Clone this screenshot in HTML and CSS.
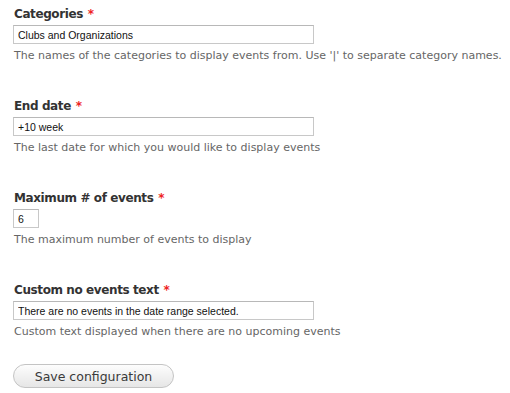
FILE: index.html
```html
<!DOCTYPE html>
<html>
<head>
<meta charset="utf-8">
<link rel="stylesheet" href="styles.css">
</head>
<body>
<form class="config">
  <div class="item">
    <label class="label">Categories <span class="req">*</span></label>
    <input class="text" type="text" value="Clubs and Organizations">
    <div class="desc">The names of the categories to display events from. Use '|' to separate category names.</div>
  </div>
  <div class="item">
    <label class="label">End date <span class="req">*</span></label>
    <input class="text" type="text" value="+10 week">
    <div class="desc">The last date for which you would like to display events</div>
  </div>
  <div class="item">
    <label class="label">Maximum # of events <span class="req">*</span></label>
    <input class="text num" type="text" value="6">
    <div class="desc">The maximum number of events to display</div>
  </div>
  <div class="item">
    <label class="label">Custom no events text <span class="req">*</span></label>
    <input class="text" type="text" value="There are no events in the date range selected.">
    <div class="desc">Custom text displayed when there are no upcoming events</div>
  </div>
  <div class="actions">
    <button class="btn" type="button">Save configuration</button>
  </div>
</form>
</body>
</html>
```

FILE: styles.css
```css
html, body {
  margin: 0;
  padding: 0;
  background: #fff;
}
body {
  font-family: "DejaVu Sans", Verdana, sans-serif;
  color: #333;
}
.config {
  padding: 6px 0 0 13px;
}
.item {
  display: flex;
  flex-direction: column;
  align-items: flex-start;
}
.item + .item {
  margin-top: 34px;
}
.label {
  font-size: 12px;
  letter-spacing: -0.4px;
  font-weight: bold;
  line-height: 16px;
  color: #333;
  margin-bottom: 3px;
  padding-left: 1px;
}
.req {
  color: #e22;
  margin-left: 1px;
}
.text {
  box-sizing: border-box;
  width: 301px;
  height: 19px;
  margin: 0;
  padding: 0 4px;
  border: 1px solid #c8c8c8;
  border-top-color: #b8b8b8;
  font-family: "Liberation Sans", Arial, sans-serif;
  font-size: 10.5px;
  color: #111;
  background: #fff;
}
.num {
  width: 26px;
}
.desc {
  font-size: 11px;
  line-height: 16px;
  color: #666;
  margin-top: 4px;
  white-space: nowrap;
  padding-left: 1px;
}
.actions {
  margin-top: 24px;
}
.btn {
  box-sizing: border-box;
  width: 161px;
  height: 24px;
  border: 1px solid #c4c4c4;
  border-radius: 12px;
  background: linear-gradient(#fdfdfd, #e6e6e6);
  font-family: "DejaVu Sans", Verdana, sans-serif;
  font-size: 12.5px;
  color: #3a3a3a;
  padding: 0;
}
```
